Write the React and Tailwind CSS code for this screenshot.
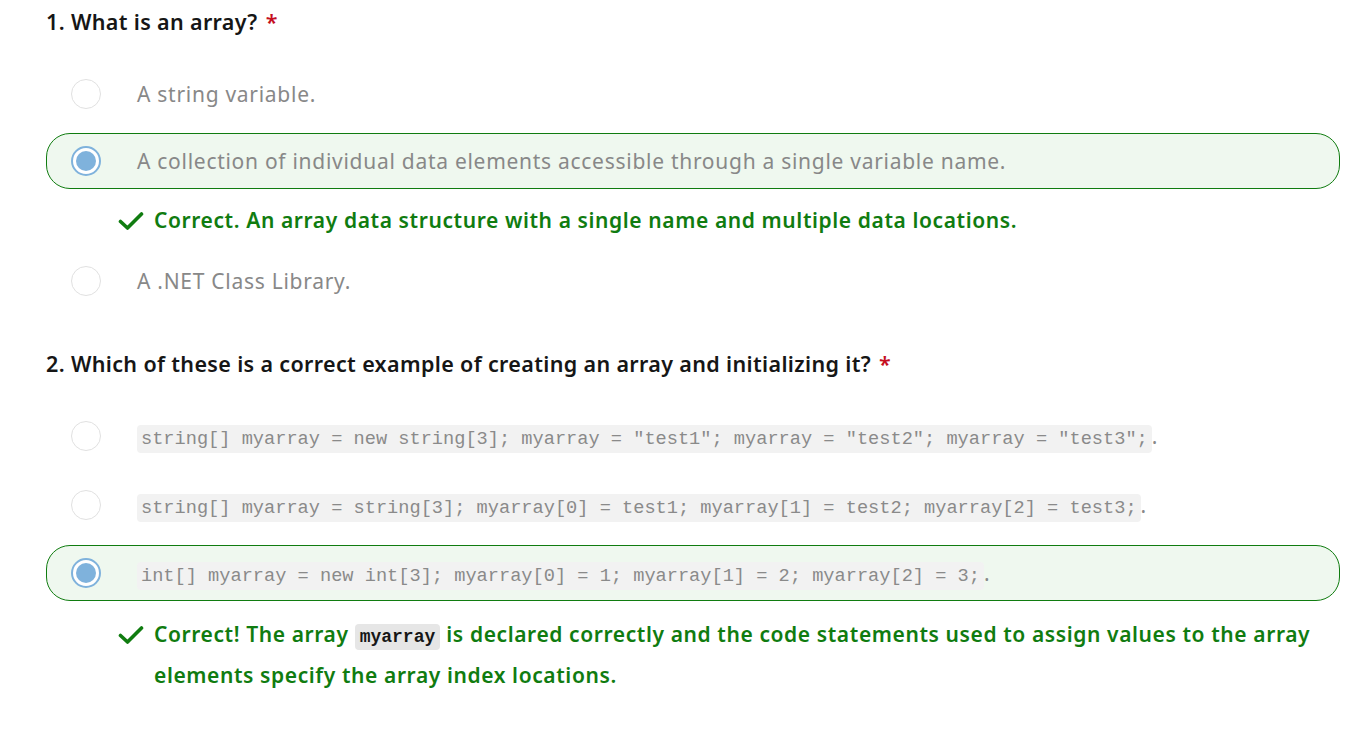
const sans = { fontFamily: '"Noto Sans", "Open Sans", sans-serif' }

function Check() {
  return (
    <svg viewBox="0 0 26 18" className="mt-[12px] h-[18px] w-[26px] shrink-0" fill="none">
      <path d="M2.5 9.5 L9.5 16 L23.5 2" stroke="#107c10" strokeWidth="3.6" strokeLinecap="round" strokeLinejoin="round" />
    </svg>
  )
}

function Radio({ checked }) {
  if (checked) {
    return (
      <span className="flex h-[30px] w-[30px] shrink-0 items-center justify-center rounded-full border-2 border-[#7fb2dc] bg-white">
        <span className="h-[20px] w-[20px] rounded-full bg-[#7fb2dc]" />
      </span>
    )
  }
  return <span className="h-[30px] w-[30px] shrink-0 rounded-full border border-[#e1e1e1] bg-white" />
}

function Code({ children }) {
  return (
    <span className="rounded-[4px] bg-[#f2f2f2] px-[4px] py-[3px] font-['Liberation_Mono',monospace] text-[18.65px] leading-none tracking-normal text-[#8a8a8a]">
      {children}
    </span>
  )
}

function Option({ checked, children }) {
  return (
    <div
      className={
        'flex h-[56px] items-center gap-[36px] rounded-[24px] border pl-[24px] ' +
        (checked ? 'border-[#107c10] bg-[#eff8ef]' : 'border-transparent')
      }
    >
      <Radio checked={checked} />
      <div className="pt-[2px] text-[21px] tracking-[0.72px] text-[#888888]">{children}</div>
    </div>
  )
}

function Feedback({ children }) {
  return (
    <div className="ml-[72px] flex items-start gap-[10px] text-[21px] font-semibold leading-[41px] tracking-[0.6px] text-[#107c10]">
      <Check />
      <div>{children}</div>
    </div>
  )
}

function Title({ n, children }) {
  return (
    <h2 className="flex h-[44px] items-center text-[21.5px] font-semibold tracking-[0.35px] text-[#161616]">
      {n}. {children}
      <span className="ml-[8px] text-[#c50f1f]">*</span>
    </h2>
  )
}

export default function App() {
  return (
    <div className="min-h-screen bg-white pl-[46px] pr-[26px]" style={sans}>
      <Title n={1}>What is an array?</Title>
      <div className="mt-[22px] flex flex-col">
        <Option>A string variable.</Option>
        <div className="mt-[11px]">
          <Option checked>A collection of individual data elements accessible through a single variable name.</Option>
        </div>
        <div className="mt-[11px]">
          <Feedback>Correct. An array data structure with a single name and multiple data locations.</Feedback>
        </div>
        <div className="mt-[12px]">
          <Option>A .NET Class Library.</Option>
        </div>
      </div>

      <div className="mt-[33px]">
        <Title n={2}>Which of these is a correct example of creating an array and initializing it?</Title>
      </div>
      <div className="mt-[22px] flex flex-col">
        <Option>
          <Code>string[] myarray = new string[3]; myarray = "test1"; myarray = "test2"; myarray = "test3";</Code>.
        </Option>
        <div className="mt-[13px]">
          <Option>
            <Code>string[] myarray = string[3]; myarray[0] = test1; myarray[1] = test2; myarray[2] = test3;</Code>.
          </Option>
        </div>
        <div className="mt-[12px]">
          <Option checked>
            <Code>int[] myarray = new int[3]; myarray[0] = 1; myarray[1] = 2; myarray[2] = 3;</Code>.
          </Option>
        </div>
        <div className="mt-[13px]">
          <Feedback>
            Correct! The array{' '}
            <span className="rounded-[4px] bg-[#e6e6e6] px-[5px] py-[3px] font-['Liberation_Mono',monospace] text-[18px] font-bold leading-none tracking-normal text-[#171717]">
              myarray
            </span>{' '}
            is declared correctly and the code statements used to assign values to the array
            <br />
            elements specify the array index locations.
          </Feedback>
        </div>
      </div>
    </div>
  )
}
